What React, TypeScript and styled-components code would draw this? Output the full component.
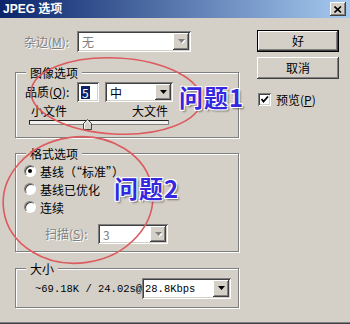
import React from "react";
import styled, { createGlobalStyle } from "styled-components";

const GlobalStyle = createGlobalStyle`
  html, body { margin: 0; padding: 0; background: #d4d0c8; }
  body {
    font-family: "Noto Sans CJK SC", "Liberation Sans", sans-serif;
    font-size: 12px;
    color: #000;
  }
`;

const raised = `
  box-shadow: inset -1px -1px 0 #404040, inset 1px 1px 0 #fff,
    inset -2px -2px 0 #808080, inset 2px 2px 0 #d4d0c8;
`;
const sunken = `
  box-shadow: inset 1px 1px 0 #808080, inset -1px -1px 0 #fff,
    inset 2px 2px 0 #404040, inset -2px -2px 0 #d4d0c8;
`;

const Window = styled.div`
  position: relative;
  width: 350px;
  height: 324px;
  box-sizing: border-box;
  background: #d4d0c8;
  box-shadow: inset 0 -1px 0 #404040, inset 0 -2px 0 #808080;
  overflow: hidden;
`;

const TitleBar = styled.div`
  height: 18px;
  display: flex;
  align-items: center;
  justify-content: space-between;
  padding: 0 4px 0 3px;
  background: linear-gradient(to right, #0a246a, #a6caf0);
`;

const Title = styled.span`
  color: #fff;
  font-weight: bold;
  font-size: 12px;
  line-height: 18px;
  font-family: "Liberation Sans", "Noto Sans CJK SC", sans-serif;
`;

const CloseBtn = styled.div`
  width: 16px;
  height: 14px;
  background: #d4d0c8;
  ${raised}
  display: flex;
  align-items: center;
  justify-content: center;
`;

const Body = styled.div`
  display: grid;
  grid-template-columns: 224px 82px;
  column-gap: 18px;
  padding-left: 15px;
  align-items: start;
`;

const LeftCol = styled.div`
  display: flex;
  flex-direction: column;
  padding-top: 13px;
`;

const RightCol = styled.div`
  display: flex;
  flex-direction: column;
  padding-top: 12px;
`;

const Row = styled.div<{ $h: number; $pl?: number; $mt?: number }>`
  display: flex;
  align-items: center;
  height: ${(p) => p.$h}px;
  padding-left: ${(p) => p.$pl ?? 0}px;
  margin-top: ${(p) => p.$mt ?? 0}px;
`;

const Label = styled.span<{ $w: number; $disabled?: boolean }>`
  flex: none;
  width: ${(p) => p.$w}px;
  white-space: nowrap;
  line-height: 14px;
  color: ${(p) => (p.$disabled ? "#808080" : "#000")};
  text-shadow: ${(p) => (p.$disabled ? "1px 1px 0 #fff" : "none")};
`;

const U = styled.span`
  text-decoration: underline;
`;

const Field = styled.div<{ $w: number; $h: number; $ml?: number }>`
  flex: none;
  box-sizing: border-box;
  width: ${(p) => p.$w}px;
  height: ${(p) => p.$h}px;
  margin-left: ${(p) => p.$ml ?? 0}px;
  padding: 2px;
  background: #fff;
  ${sunken}
  display: flex;
  align-items: stretch;
`;

const FieldValue = styled.span<{ $disabled?: boolean; $mono?: boolean }>`
  flex: 1;
  display: flex;
  align-items: center;
  padding-left: ${(p) => (p.$mono ? 1 : 3)}px;
  white-space: nowrap;
  overflow: hidden;
  color: ${(p) => (p.$disabled ? "#808080" : "#000")};
  font-family: ${(p) =>
    p.$mono
      ? `"Liberation Mono", monospace`
      : `"Noto Sans CJK SC", "Liberation Sans", sans-serif`};
  font-size: ${(p) => (p.$mono ? "10.5px" : "12px")};
`;

const Selected = styled.span`
  background: #0a246a;
  color: #fff;
  line-height: 13px;
  padding: 0 1px;
  margin-left: -1px;
`;

const DropBtn = styled.div`
  flex: none;
  width: 16px;
  background: #d4d0c8;
  ${raised}
  display: flex;
  align-items: center;
  justify-content: center;
`;

const Group = styled.div<{ $h: number; $mt: number; $pt: number; $pl: number }>`
  position: relative;
  box-sizing: border-box;
  height: ${(p) => p.$h}px;
  margin-top: ${(p) => p.$mt}px;
  padding: ${(p) => p.$pt}px 0 0 ${(p) => p.$pl}px;
  border: 1px solid #808080;
  box-shadow: inset 1px 1px 0 #fff, 1px 1px 0 #fff;
`;

const Legend = styled.span`
  position: absolute;
  top: -8px;
  left: 10px;
  padding: 0 4px;
  line-height: 15px;
  background: #d4d0c8;
`;

const SliderBlock = styled.div`
  width: 140px;
  margin: 2px 0 0 4px;
  display: flex;
  flex-direction: column;
`;

const SliderLabels = styled.div`
  display: flex;
  justify-content: space-between;
  padding: 0 1px 0 2px;
  line-height: 14px;
`;

const Track = styled.div`
  position: relative;
  margin-top: 2px;
  height: 5px;
  box-sizing: border-box;
  border: 1px solid #202020;
  border-right-color: #808080;
  border-bottom-color: #808080;
  background: #f2f1ee;
`;

const Thumb = styled.svg`
  position: absolute;
  left: 53px;
  top: -2px;
`;

const RadioRow = styled.label`
  display: flex;
  align-items: center;
  height: 18px;
  gap: 4px;
  white-space: nowrap;
`;

const Radio = styled.span<{ $checked?: boolean }>`
  flex: none;
  width: 12px;
  height: 12px;
  border-radius: 50%;
  box-sizing: border-box;
  background: #fff;
  border: 1px solid;
  border-color: #808080 #fff #fff #808080;
  display: flex;
  align-items: center;
  justify-content: center;
  box-shadow: inset 1px 1px 0 #404040;
  &::after {
    content: "";
    width: 4px;
    height: 4px;
    border-radius: 50%;
    background: ${(p) => (p.$checked ? "#000" : "transparent")};
  }
`;

const MonoText = styled.span`
  flex: none;
  width: 107px;
  font-family: "Liberation Mono", monospace;
  font-size: 10.5px;
  white-space: nowrap;
`;

const Button = styled.div<{ $default?: boolean; $mt?: number }>`
  box-sizing: border-box;
  width: 82px;
  height: 22px;
  margin-top: ${(p) => p.$mt ?? 0}px;
  display: flex;
  align-items: center;
  justify-content: center;
  background: #d4d0c8;
  border: ${(p) => (p.$default ? "1px solid #000" : "none")};
  ${raised}
  line-height: 14px;
`;

const CheckRow = styled.label`
  display: flex;
  align-items: center;
  gap: 5px;
  margin: 14px 0 0 1px;
  height: 13px;
  white-space: nowrap;
`;

const CheckBox = styled.span`
  flex: none;
  width: 13px;
  height: 13px;
  box-sizing: border-box;
  background: #fff;
  ${sunken}
  display: flex;
  align-items: center;
  justify-content: center;
`;

const Overlay = styled.svg`
  position: absolute;
  left: 0;
  top: 0;
  pointer-events: none;
`;

const AnnoText = styled.span<{ $x: number; $y: number }>`
  position: absolute;
  left: ${(p) => p.$x}px;
  top: ${(p) => p.$y}px;
  font-family: "Noto Sans CJK SC", "Liberation Sans", sans-serif;
  font-size: 24px;
  font-weight: 700;
  line-height: 24px;
  letter-spacing: 1px;
  color: #3526e0;
  white-space: nowrap;
  pointer-events: none;
  text-shadow: -1px -1px 0 #fff, 1px -1px 0 #fff, -1px 1px 0 #fff,
    1px 1px 0 #fff, 2px 2px 2px rgba(0, 0, 0, 0.45);
`;

const Arrow = ({ disabled }: { disabled?: boolean }) => (
  <svg width="8" height="5" viewBox="0 0 8 5">
    {disabled && <polygon points="2,1 9,1 5.5,5" fill="#fff" />}
    <polygon points="1,0 8,0 4.5,4" fill={disabled ? "#808080" : "#000"} />
  </svg>
);

const Combo = ({
  w,
  h,
  ml,
  value,
  disabled,
  mono,
}: {
  w: number;
  h: number;
  ml?: number;
  value: React.ReactNode;
  disabled?: boolean;
  mono?: boolean;
}) => (
  <Field $w={w} $h={h} $ml={ml}>
    <FieldValue $disabled={disabled} $mono={mono}>
      {value}
    </FieldValue>
    <DropBtn>
      <Arrow disabled={disabled} />
    </DropBtn>
  </Field>
);

export default function App() {
  return (
    <Window>
      <GlobalStyle />
      <TitleBar>
        <Title>JPEG 选项</Title>
        <CloseBtn>
          <svg width="8" height="7" viewBox="0 0 8 7">
            <path d="M0.5 0.5 L7 6.5 M7 0.5 L0.5 6.5" stroke="#000" strokeWidth="1.6" />
          </svg>
        </CloseBtn>
      </TitleBar>
      <Body>
        <LeftCol>
          <Row $h={21} $pl={9}>
            <Label $w={53} $disabled>
              杂边(<U>M</U>):
            </Label>
            <Combo w={114} h={21} value="无" disabled />
          </Row>

          <Group $h={66} $mt={20} $pt={9} $pl={9}>
            <Legend>图像选项</Legend>
            <Row $h={20}>
              <Label $w={52}>
                品质(<U>Q</U>):
              </Label>
              <Field $w={22} $h={20}>
                <FieldValue>
                  <Selected>5</Selected>
                </FieldValue>
              </Field>
              <Combo w={68} h={20} ml={6} value="中" />
            </Row>
            <SliderBlock>
              <SliderLabels>
                <span>小文件</span>
                <span>大文件</span>
              </SliderLabels>
              <Track>
                <Thumb width="10" height="11" viewBox="0 0 10 11">
                  <polygon points="0.5,10.5 0.5,4.5 4.5,0.5 8.5,4.5 8.5,10.5" fill="#d4d0c8" stroke="#404040" />
                  <polyline points="1.5,9.5 1.5,4.9 4.5,1.9 7.5,4.9" fill="none" stroke="#fff" />
                </Thumb>
              </Track>
            </SliderBlock>
          </Group>

          <Group $h={99} $mt={15} $pt={8} $pl={8}>
            <Legend>格式选项</Legend>
            <RadioRow>
              <Radio $checked />
              <span>基线（“标准”）</span>
            </RadioRow>
            <RadioRow>
              <Radio />
              <span>基线已优化</span>
            </RadioRow>
            <RadioRow>
              <Radio />
              <span>连续</span>
            </RadioRow>
            <Row $h={20} $pl={21} $mt={8}>
              <Label $w={53} $disabled>
                扫描(<U>S</U>):
              </Label>
              <Combo w={70} h={20} value="3" disabled />
            </Row>
          </Group>

          <Group $h={40} $mt={16} $pt={9} $pl={19}>
            <Legend>大小</Legend>
            <Row $h={21}>
              <MonoText>~69.18K / 24.02s@</MonoText>
              <Combo w={89} h={21} value="28.8Kbps" mono />
            </Row>
          </Group>
        </LeftCol>

        <RightCol>
          <Button $default>好</Button>
          <Button $mt={5}>取消</Button>
          <CheckRow>
            <CheckBox>
              <svg width="9" height="9" viewBox="0 0 9 9">
                <polyline points="1.5,4 3.5,6.5 8,1.5" fill="none" stroke="#000" strokeWidth="1.8" />
              </svg>
            </CheckBox>
            <span>
              预览(<U>P</U>)
            </span>
          </CheckRow>
        </RightCol>
      </Body>

      <Overlay width="350" height="324" viewBox="0 0 350 324">
        <ellipse cx="116" cy="96" rx="85" ry="38" transform="rotate(3 116 96)" fill="none" stroke="#dd5a5e" strokeWidth="1.6" />
        <ellipse cx="78" cy="200" rx="75" ry="63" transform="rotate(-8 78 200)" fill="none" stroke="#dd5a5e" strokeWidth="1.6" />
      </Overlay>
      <AnnoText $x={179} $y={85}>问题1</AnnoText>
      <AnnoText $x={114} $y={176}>问题2</AnnoText>
    </Window>
  );
}
